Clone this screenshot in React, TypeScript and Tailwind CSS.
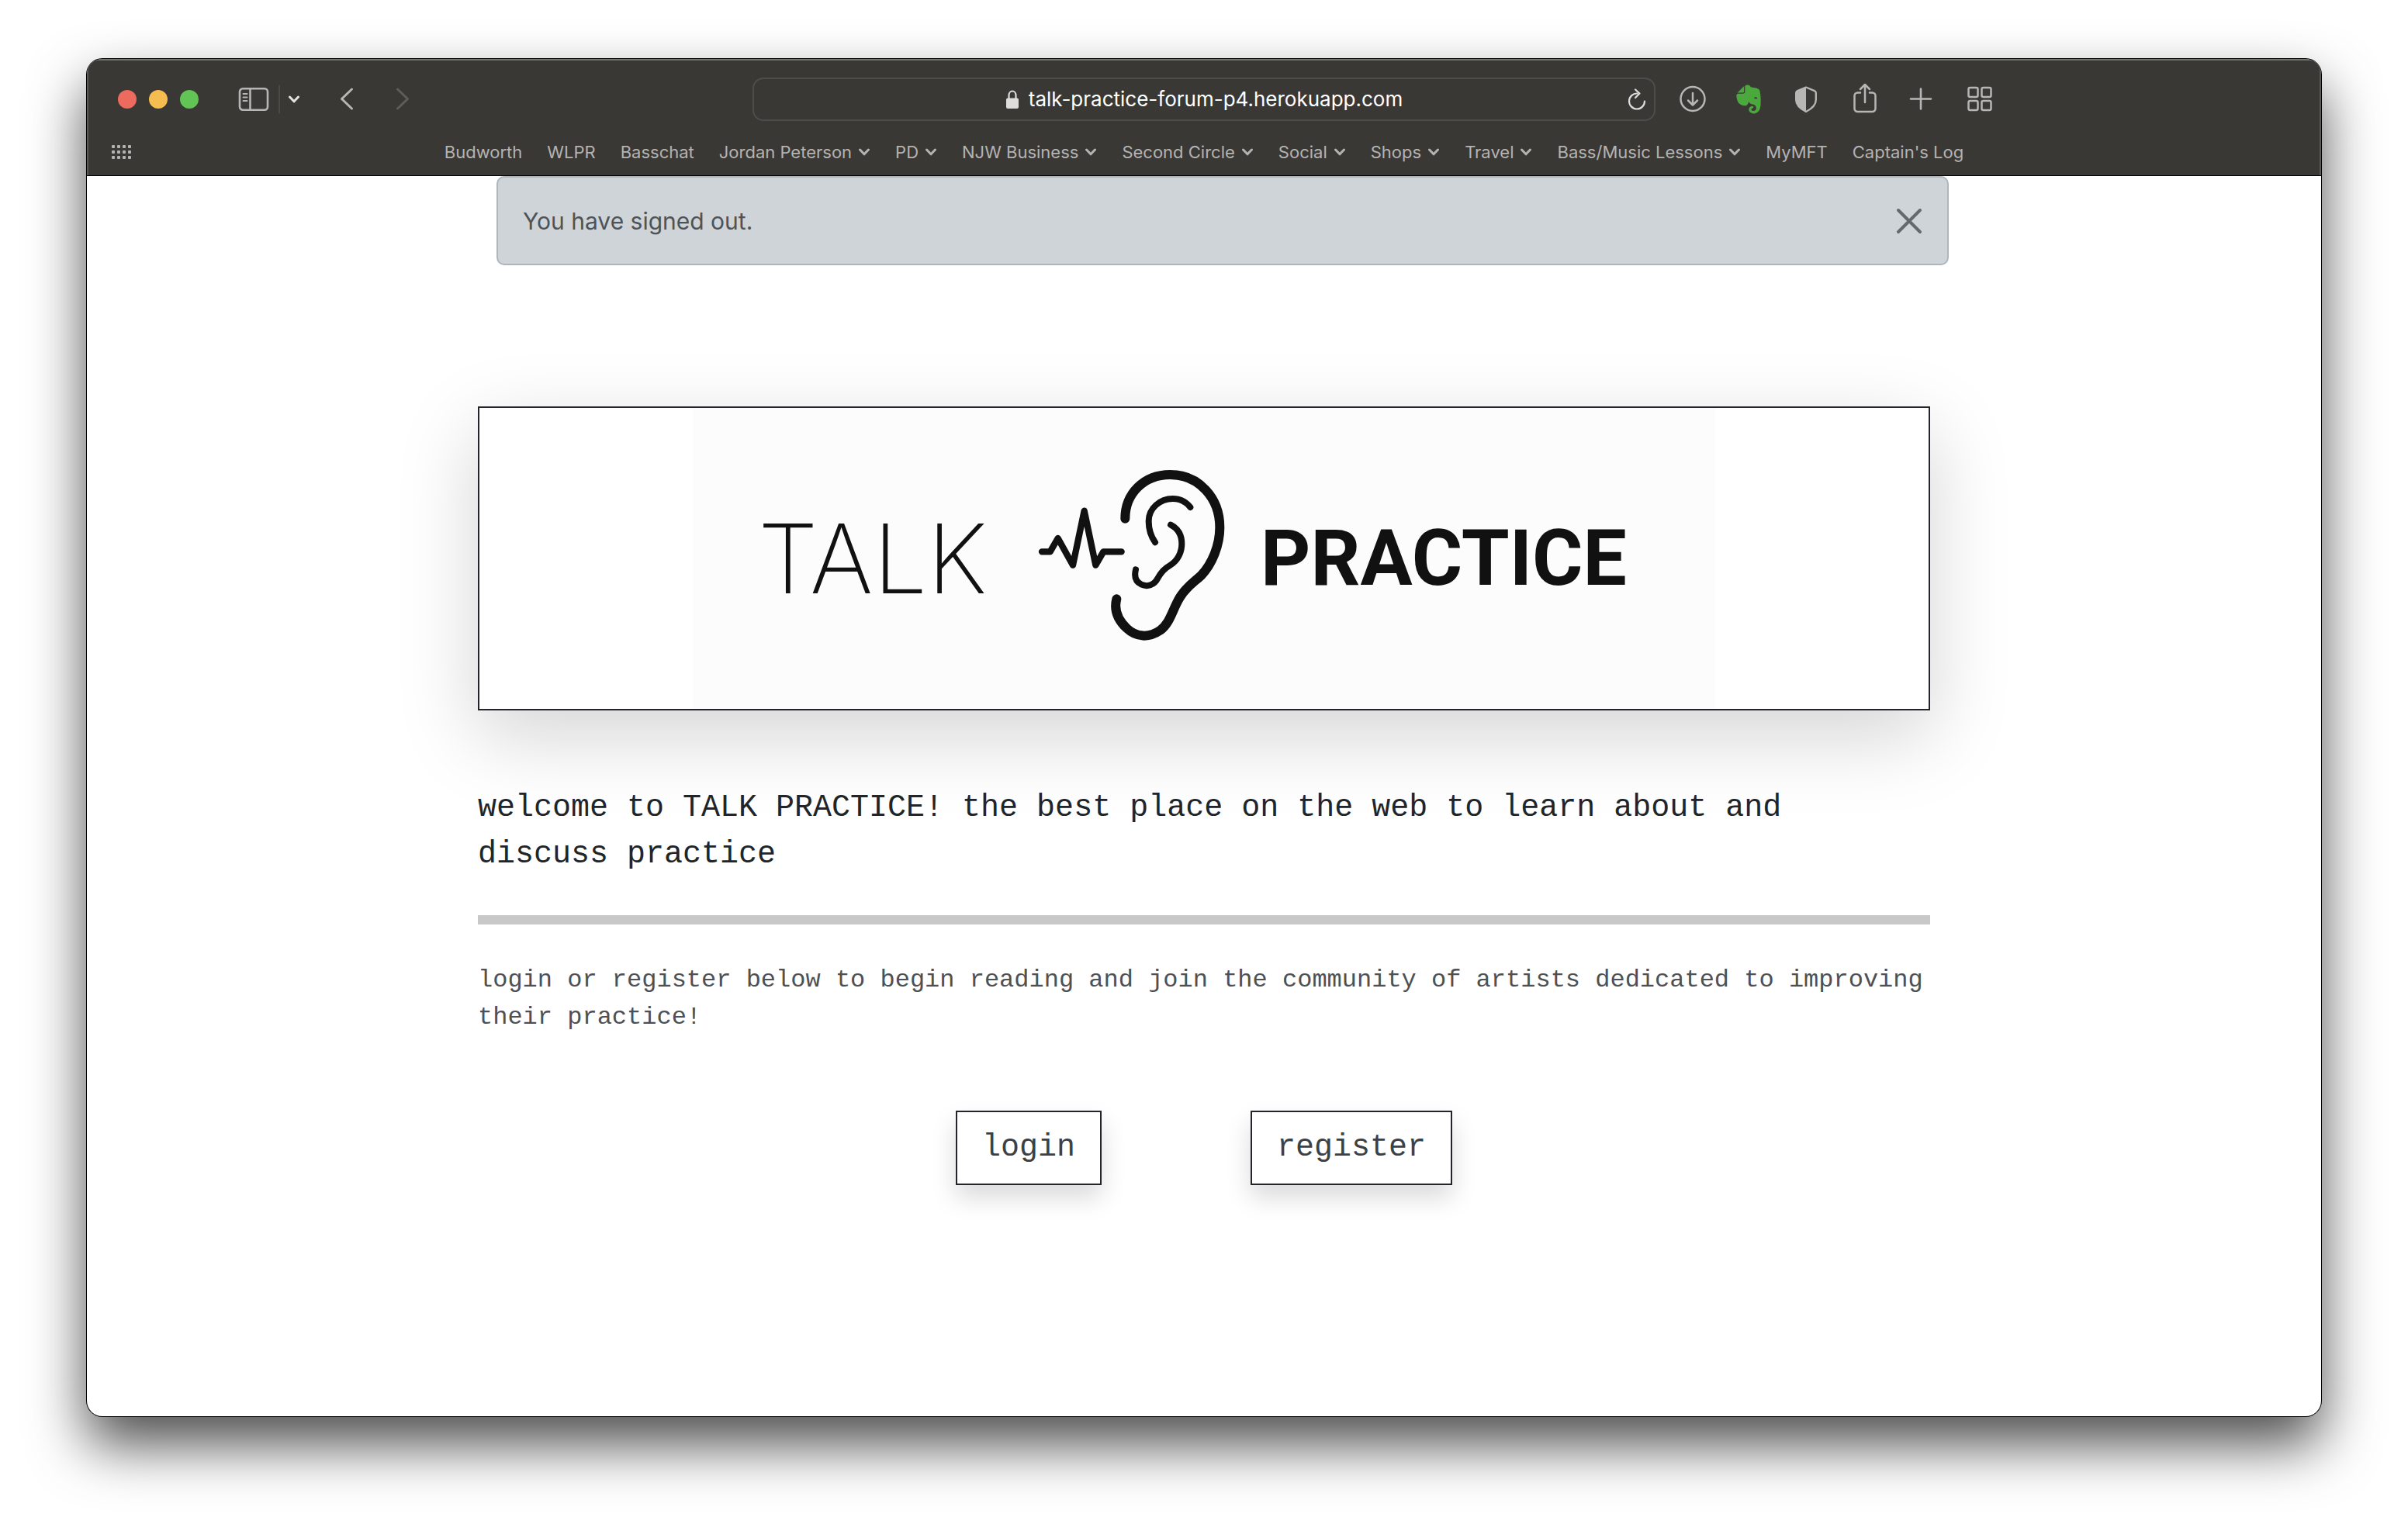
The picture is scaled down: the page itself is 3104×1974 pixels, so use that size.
import { FaEvernote } from "react-icons/fa";

type Bookmark = { label: string; menu?: boolean };

const bookmarks: Bookmark[] = [
  { label: "Budworth" },
  { label: "WLPR" },
  { label: "Basschat" },
  { label: "Jordan Peterson", menu: true },
  { label: "PD", menu: true },
  { label: "NJW Business", menu: true },
  { label: "Second Circle", menu: true },
  { label: "Social", menu: true },
  { label: "Shops", menu: true },
  { label: "Travel", menu: true },
  { label: "Bass/Music Lessons", menu: true },
  { label: "MyMFT" },
  { label: "Captain's Log" },
];

function Chevron({ className = "" }: { className?: string }) {
  return (
    <svg viewBox="0 0 16 10" className={"h-[10px] w-4 shrink-0 " + className} fill="none" stroke="currentColor" strokeWidth="3" strokeLinecap="round" strokeLinejoin="round" aria-hidden="true">
      <path d="M2.5 2 8 7.8 13.5 2" />
    </svg>
  );
}

function TopRow() {
  return (
    <div className="grid grid-cols-[minmax(0,1fr)_minmax(0,1164px)_minmax(0,1fr)] items-center">
      <div className="flex items-center pl-10">
        <div className="flex gap-4">
          <button aria-label="Close window" className="size-6 rounded-full bg-[#ed6a5e]" />
          <button aria-label="Minimise window" className="size-6 rounded-full bg-[#f5bd4f]" />
          <button aria-label="Zoom window" className="size-6 rounded-full bg-[#61c454]" />
        </div>
        <button aria-label="Show sidebar" className="ml-[51px]">
          <svg viewBox="0 0 40 32" className="h-8 w-10" fill="none" stroke="#b8b6b4" strokeWidth="2.6">
            <rect x="2" y="2.3" width="36" height="27.4" rx="4" />
            <path d="M15.5 2v28" />
            <path d="M6.5 9h5M6.5 13.5h5M6.5 18h5" strokeWidth="2" strokeLinecap="round" />
          </svg>
        </button>
        <div className="ml-3 h-9 w-[2px] bg-[#4c4a48]" />
        <button aria-label="Tab groups" className="ml-[10px] text-[#e4e3e2]">
          <Chevron />
        </button>
        <button aria-label="Back" className="ml-[50px]">
          <svg viewBox="0 0 20 32" className="h-8 w-5" fill="none" stroke="#b8b6b4" strokeWidth="3" strokeLinecap="round" strokeLinejoin="round">
            <path d="M16.5 3 3.5 15.5l13 12.500" />
          </svg>
        </button>
        <button aria-label="Forward" className="ml-[52px]">
          <svg viewBox="0 0 20 32" className="h-8 w-5" fill="none" stroke="#5f5d5b" strokeWidth="3" strokeLinecap="round" strokeLinejoin="round">
            <path d="M3.5 3 16.500 15.500l-13 12.500" />
          </svg>
        </button>
      </div>

      <div className="grid h-14 grid-cols-[1fr_auto_1fr] items-center rounded-[14px] border-2 border-[#4e4d4b] px-2">
        <span />
        <label className="flex items-center gap-3">
          <svg viewBox="0 0 18 26" className="h-[26px] w-[18px]" aria-hidden="true">
            <path d="M4.500 13V8a4.500 5.500 0 0 1 9 0v5" fill="none" stroke="#dedddc" strokeWidth="2.200" />
            <rect x="1" y="11.500" width="16" height="13.500" rx="2" fill="#dedddc" />
          </svg>
          <input
            aria-label="Address"
            className="[field-sizing:content] bg-transparent text-[26px] leading-8 text-white outline-none"
            defaultValue="talk-practice-forum-p4.herokuapp.com"
          />
        </label>
        <button aria-label="Reload" className="justify-self-end">
          <svg viewBox="0 0 28 32" className="h-8 w-7" fill="none" stroke="#dedddc" strokeWidth="2.200" strokeLinecap="round" strokeLinejoin="round">
            <path d="M14.500 8.500A10 10 0 1 0 24 18.500" />
            <path d="M12 3.500l5.500 5-5.500 5.500" />
          </svg>
        </button>
      </div>

      <div className="flex items-center pl-[30px] text-[#b8b6b4]">
        <button aria-label="Downloads">
          <svg viewBox="0 0 36 36" className="size-9" fill="none" stroke="currentColor" strokeWidth="2.500" strokeLinecap="round" strokeLinejoin="round">
            <circle cx="18" cy="17.500" r="15.500" />
            <path d="M18 10v15M12 19.500l6 6 6-6" />
          </svg>
        </button>
        <button aria-label="Evernote" className="ml-9">
          <FaEvernote className="h-[42px] w-9 text-[#4aa83d]" />
        </button>
        <button aria-label="Privacy report" className="ml-[38px]">
          <svg viewBox="0 0 36 36" className="size-9">
            <path d="M18 2.500 29 7.200c1.200.5 1.800 1.200 1.800 2.600v9C30.800 26 25 30.500 18 34 11 30.500 5.200 26 5.200 18.800v-9c0-1.400.6-2.100 1.800-2.600Z" fill="none" stroke="currentColor" strokeWidth="2.400" strokeLinejoin="round" />
            <path d="M18 2.500v31.500C11 30.500 5.200 26 5.200 18.800v-9c0-1.400.6-2.100 1.800-2.600Z" fill="currentColor" />
          </svg>
        </button>
        <button aria-label="Share" className="ml-10">
          <svg viewBox="0 0 36 42" className="h-[42px] w-9" fill="none" stroke="currentColor" strokeWidth="2.500" strokeLinecap="round" strokeLinejoin="round">
            <path d="M12 12.500H8.500a4 4 0 0 0-4 4v16.500a4 4 0 0 0 4 4h19a4 4 0 0 0 4-4v-16.500a4 4 0 0 0-4-4H24" />
            <path d="M18 25V2M12 8l6-6 6 6" />
          </svg>
        </button>
        <button aria-label="New tab" className="ml-9">
          <svg viewBox="0 0 36 36" className="size-9" fill="none" stroke="currentColor" strokeWidth="2.600" strokeLinecap="round">
            <path d="M18 4.500v26M5 17.500h26" />
          </svg>
        </button>
        <button aria-label="Tab overview" className="ml-10">
          <svg viewBox="0 0 36 36" className="size-9" fill="none" stroke="currentColor" strokeWidth="2.500">
            <rect x="3.500" y="3" width="12" height="12" rx="2" />
            <rect x="20.500" y="3" width="12" height="12" rx="2" />
            <rect x="3.500" y="20" width="12" height="12" rx="2" />
            <rect x="20.500" y="20" width="12" height="12" rx="2" />
          </svg>
        </button>
      </div>
    </div>
  );
}

function BookmarksBar() {
  return (
    <nav aria-label="Bookmarks" className="mt-4 grid h-12 grid-cols-[1fr_auto_1fr] items-center text-[22px] leading-7 text-[#b5b3b1]">
      <button aria-label="Show bookmarks" className="ml-8 justify-self-start">
        <svg viewBox="0 0 26 20" className="h-5 w-[26px]" fill="currentColor">
          {[1, 8, 15].map((y) => [0, 7, 14, 21].map((x) => <rect key={x + "-" + y} x={x} y={y} width="4" height="4" rx="1" />))}
        </svg>
      </button>
      <div className="flex items-center gap-8">
        {bookmarks.map((b) =>
          b.menu ? (
            <button key={b.label} className="flex items-center gap-2 whitespace-nowrap">
              {b.label}
              <Chevron />
            </button>
          ) : (
            <a key={b.label} href="#" className="whitespace-nowrap">
              {b.label}
            </a>
          )
        )}
      </div>
      <span />
    </nav>
  );
}

function Logo() {
  return (
    <div className="flex h-full w-[1318px] items-center bg-[#fcfcfc] pl-[84px] text-[#111111]">
      <span className="w-[360px] font-[Inter] text-[124px] leading-none font-extralight">TALK</span>
      <svg viewBox="-12 0 792 780" className="h-[260px] w-[264px] shrink-0" fill="none" stroke="currentColor" strokeLinecap="round" strokeLinejoin="round" aria-hidden="true">
        <path strokeWidth="25" d="M6 364H38L68 312 126 416 170 206 214 416 244 364H314" />
        <path strokeWidth="36" d="M328 236C328 140 400 66 502 66C612 66 694 155 694 270C694 340 664 412 622 456C592 484 566 498 540 540C510 590 502 640 464 668C420 698 372 696 334 660C298 626 284 590 295 547" />
        <path strokeWidth="24" d="M444 328C426 302 419 276 419 246C419 195 464 159 512 159C540 159 562 169 580 192" />
        <path strokeWidth="24" d="M504 260C534 275 547 300 547 333C547 368 530 400 503 416C478 431 468 442 454 467C440 494 414 501 391 491C367 480 363 458 369 433" />
      </svg>
      <span className="ml-6 font-[Roboto] text-[100px] leading-none font-bold">PRACTICE</span>
    </div>
  );
}

const actionClass =
  "border-2 border-[#212529] bg-white px-8 py-4 text-[40px] leading-[60px] text-[#3d4145] shadow-[0_16px_32px_rgba(0,10,5,0.15)]";

export default function App() {
  return (
    <div className="flex min-h-screen flex-col bg-white px-28 pt-[76px] pb-[148px] font-[Inter,sans-serif]">
      <div className="flex flex-1 flex-col overflow-hidden rounded-[20px] bg-white shadow-[0_0_0_1px_#000,0_36px_72px_rgba(0,0,0,0.7)]">
        <header className="border-b border-black bg-[#3a3835] pt-6 pb-[6px] shadow-[inset_0_2px_0_#73726e,inset_2px_0_0_#5c5b58,inset_-2px_0_0_#5c5b58]">
          <TopRow />
          <BookmarksBar />
        </header>

        <main className="mx-auto w-full max-w-[1872px]">
          <div role="alert" className="-mr-6 ml-6 flex h-[115px] items-center justify-between rounded-[10px] border-2 border-[#adb5bd] bg-[#ced4d8] px-8 text-[30px] leading-[48px] text-[#4e5357]">
            You have signed out.
            <button aria-label="Dismiss">
              <svg viewBox="0 0 34 34" className="size-[34px]" fill="none" stroke="#65696c" strokeWidth="4" strokeLinecap="round">
                <path d="M3 3l28 28M31 3 3 31" />
              </svg>
            </button>
          </div>

          <div className="mt-[182px] flex h-[392px] justify-center border-2 border-[#212529] bg-white shadow-[0_32px_96px_rgba(0,10,5,0.175)]">
            <Logo />
          </div>

          <div className="font-['Liberation_Mono',monospace]">
            <h1 className="mt-24 text-[40px] leading-[60px] text-[#212529]">
              welcome to TALK PRACTICE! the best place on the web to learn about and discuss practice
            </h1>
            <hr className="my-12 h-3 border-0 bg-[#c8c8c8]" />
            <p className="text-[32px] leading-[48px] text-[#4d5155]">
              login or register below to begin reading and join the community of artists dedicated to improving their practice!
            </p>
            <div className="mt-24 flex justify-center gap-48">
              <button className={actionClass}>login</button>
              <button className={actionClass}>register</button>
            </div>
          </div>
        </main>
      </div>
    </div>
  );
}
